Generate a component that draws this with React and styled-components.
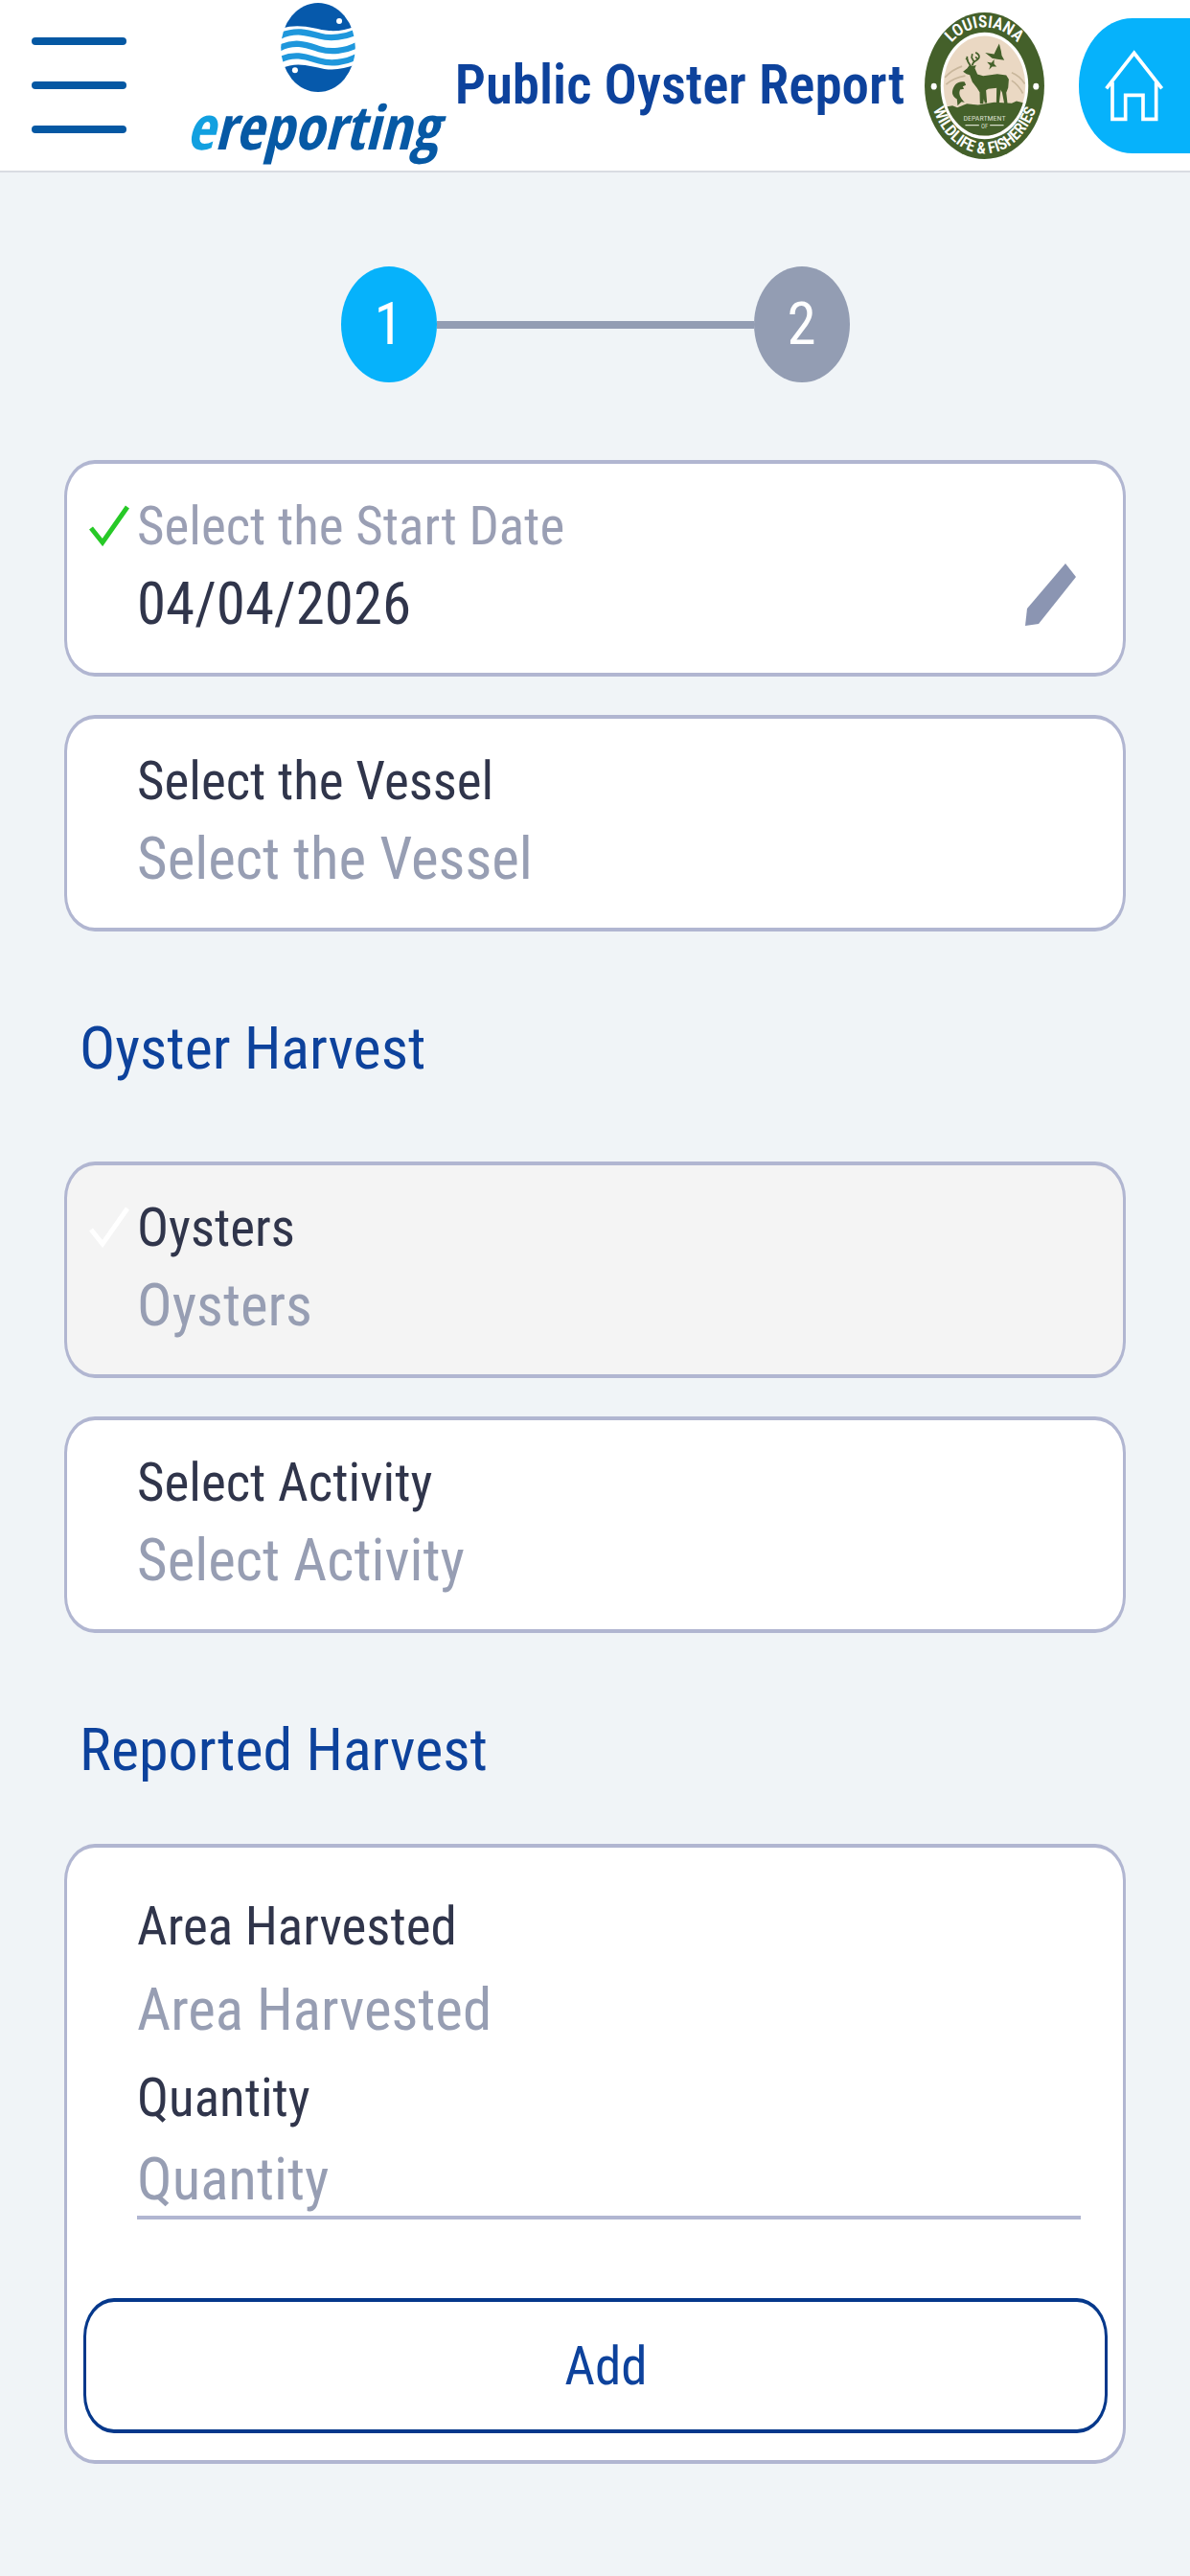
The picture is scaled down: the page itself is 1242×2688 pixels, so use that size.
import React, { useState } from "react";
import styled, { createGlobalStyle } from "styled-components";

const sans = `"Roboto Condensed", Roboto, "Liberation Sans", sans-serif`;

const App = () => {
	const [date, setDate] = useState("04/04/2026");
	const [vessel, setVessel] = useState("");
	const [activity, setActivity] = useState("");
	const [area, setArea] = useState("");
	const [quantity, setQuantity] = useState("");

	return (
		<>
			<GlobalStyle />
			<Header>
				<MenuButton type="button" aria-label="Open menu">
					<Bar />
					<Bar />
					<Bar />
				</MenuButton>
				<Logo href="#">
					<FishBall />
					<LogoText>
						<span>e</span>reporting
					</LogoText>
				</Logo>
				<Title>Public Oyster Report</Title>
				<Seal />
				<HomeLink href="#" aria-label="Home">
					<HouseIcon />
				</HomeLink>
			</Header>

			<Main>
				<Steps>
					<Step $active>1</Step>
					<StepLine />
					<Step>2</Step>
				</Steps>

				<CardList>
					<Card>
						<CheckIcon color="#27c927" />
						<Field>
							<Label htmlFor="date" $done>
								Select the Start Date
							</Label>
							<Input
								id="date"
								type="text"
								value={date}
								onChange={(e) => setDate(e.target.value)}
							/>
						</Field>
						<EditButton type="button" aria-label="Edit start date">
							<PencilIcon />
						</EditButton>
					</Card>
					<Card>
						<Field>
							<Label htmlFor="vessel">Select the Vessel</Label>
							<Select
								id="vessel"
								value={vessel}
								onChange={(e) => setVessel(e.target.value)}
							>
								<option value="">Select the Vessel</option>
							</Select>
						</Field>
					</Card>
				</CardList>

				<Heading>Oyster Harvest</Heading>
				<CardList>
					<Card $disabled>
						<CheckIcon color="#ffffff" />
						<Field>
							<Label htmlFor="species">Oysters</Label>
							<Select id="species" disabled>
								<option>Oysters</option>
							</Select>
						</Field>
					</Card>
					<Card>
						<Field>
							<Label htmlFor="activity">Select Activity</Label>
							<Select
								id="activity"
								value={activity}
								onChange={(e) => setActivity(e.target.value)}
							>
								<option value="">Select Activity</option>
							</Select>
						</Field>
					</Card>
				</CardList>

				<Heading $tight>Reported Harvest</Heading>
				<HarvestCard>
					<HarvestFields>
						<Field $loose>
							<Label htmlFor="area">Area Harvested</Label>
							<Select
								id="area"
								value={area}
								onChange={(e) => setArea(e.target.value)}
							>
								<option value="">Area Harvested</option>
							</Select>
						</Field>
						<Field $loose>
							<Label htmlFor="quantity">Quantity</Label>
							<Input
								id="quantity"
								type="text"
								$underline
								placeholder="Quantity"
								value={quantity}
								onChange={(e) => setQuantity(e.target.value)}
							/>
						</Field>
					</HarvestFields>
					<AddButton type="button">Add</AddButton>
				</HarvestCard>
			</Main>
		</>
	);
};

export default App;

const FishBall = () => (
	<svg width="78" height="93" viewBox="880 9 232 278" aria-hidden="true">
		<clipPath id="ball">
			<ellipse cx="996" cy="148" rx="116" ry="139" />
		</clipPath>
		<g clipPath="url(#ball)">
			<path
				fill="#0659ab"
				d="M870 0H1120V78C1090 92 1062 98 1030 96C985 92 940 70 880 90Z"
			/>
			<path
				fill="#0659ab"
				d="M870 290H1120V198C1085 214 1050 220 1015 215C975 208 930 190 880 214Z"
			/>
			<g fill="none" stroke="#1f97dc" strokeWidth="19">
				<path d="M876 113C925 90 965 102 1000 112S1080 116 1116 100" />
				<path d="M874 151C925 124 965 142 1000 153S1080 160 1118 140" />
				<path d="M876 187C925 162 965 180 1000 190S1080 196 1118 176" />
			</g>
		</g>
		<circle cx="1062" cy="66" r="9" fill="#fff" />
		<circle cx="924" cy="219" r="9" fill="#fff" />
	</svg>
);

const Seal = () => (
	<SealSvg
		width="125"
		height="153"
		viewBox="73 37 374 458"
		role="img"
		aria-label="Louisiana Department of Wildlife and Fisheries"
	>
		<defs>
			<path id="sealTop" d="M109 266A151 183 0 0 1 411 266" />
			<path id="sealBottom" d="M83 240A177 238 0 0 0 437 240" />
			<clipPath id="sealInner">
				<ellipse cx="260" cy="266" rx="128" ry="156" />
			</clipPath>
		</defs>
		<ellipse cx="260" cy="266" rx="187" ry="229" fill="#44602a" />
		<ellipse cx="260" cy="266" rx="137" ry="167" fill="#fff" />
		<g clipPath="url(#sealInner)">
			<rect x="120" y="100" width="280" height="340" fill="#ead8c3" />
			<g fill="none" stroke="#c9b79c" strokeWidth="5">
				<path d="M136 240Q160 215 190 205M140 262Q165 240 200 235" />
				<path d="M345 225Q370 235 386 260M345 250Q365 262 380 290" />
			</g>
			<path
				fill="#44602a"
				d="M120 335L160 328L175 334L205 322L240 326L290 318L345 321L360 314L400 324V440H120Z"
			/>
		</g>
		<g fill="#44602a">
			<path d="M193 222L206 211L214 200L222 205L234 202L230 211L238 230L256 235L300 229L328 233L336 246L334 272L328 288L332 322H322L315 286L306 272L272 276L262 282L256 322H246L245 286L236 272L222 254L214 232L204 229Z" />
			<path d="M298 270L312 270L306 320H297ZM248 270L264 270L268 320H261Z" />
			<path d="M262 163L290 167L298 150L306 134L312 158L314 172L322 186L300 183L284 180Z" />
			<path d="M268 192L282 194L290 184L290 198L298 206L284 206L274 216L278 203Z" />
			<path d="M160 282C164 262 178 250 198 254L202 264L192 268L196 276L184 278C178 292 184 302 198 318L188 316L176 328L174 308C162 300 158 292 160 282Z" />
		</g>
		<g fill="none" stroke="#44602a" strokeWidth="5">
			<path d="M217 204C208 194 204 186 206 174M209 188L202 180M222 203C222 188 236 190 242 180C246 172 240 166 232 162M228 192L220 178L222 166M240 184L232 176" />
		</g>
		<g fill="#fff" fontFamily={sans} textAnchor="middle">
			<text fontSize="52" fontWeight="600">
				<textPath href="#sealTop" startOffset="50%">
					LOUISIANA
				</textPath>
			</text>
			<text fontSize="50" fontWeight="600">
				<textPath href="#sealBottom" startOffset="50%">
					WILDLIFE &amp; FISHERIES
				</textPath>
			</text>
			<text x="260" y="374" fontSize="24" fill="#d5dcc9">
				DEPARTMENT
			</text>
			<text x="260" y="398" fontSize="20" fill="#d5dcc9">
				OF
			</text>
			<path d="M200 387H243V391H200ZM277 387H320V391H277Z" fill="#d5dcc9" />
			<ellipse cx="102" cy="268" rx="9" ry="10" />
			<ellipse cx="421" cy="268" rx="9" ry="10" />
		</g>
	</SealSvg>
);

const HouseIcon = () => (
	<svg width="61" height="75" viewBox="636 149 183 225" aria-hidden="true">
		<path
			fill="none"
			stroke="#fff"
			strokeWidth="11"
			d="M641 270L728 159L815 270M660 250V366H701V291H756V366H797V250"
		/>
	</svg>
);

const CheckIcon = ({ color }) => (
	<CheckSvg width="42" height="43" viewBox="0 0 42 43" aria-hidden="true">
		<path d="M2 24L14 39L40 2" fill="none" stroke={color} strokeWidth="5" />
	</CheckSvg>
);

const PencilIcon = () => (
	<svg width="53" height="65" viewBox="0 0 53 65" aria-hidden="true">
		<path d="M42 0L53 14L14 63L0 65L2 47Z" fill="#8b95b2" />
	</svg>
);

const GlobalStyle = createGlobalStyle`
	* {
		box-sizing: border-box;
	}

	body {
		margin: 0;
		min-height: 100vh;
		background: #f0f4f7;
		font-family: ${sans};
	}

	button, input, select {
		font-family: inherit;
	}
`;

const Header = styled.header`
	display: flex;
	align-items: center;
	height: 180px;
	padding-left: 33px;
	background: #fff;
	border-bottom: 2px solid #d9dce2;
`;

const MenuButton = styled.button`
	display: flex;
	flex-direction: column;
	gap: 38px;
	width: 99px;
	padding: 0;
	margin-right: 66px;
	border: none;
	background: none;
	cursor: pointer;
`;

const Bar = styled.span`
	height: 8px;
	border-radius: 4px;
	background: #0558a3;
`;

const Logo = styled.a`
	align-self: flex-start;
	display: flex;
	flex-direction: column;
	align-items: center;
	width: 268px;
	padding-top: 3px;
	text-decoration: none;
`;

const LogoText = styled.span`
	padding-right: 12px;
	font-family: "Open Sans Condensed", "Open Sans", sans-serif;
	font-size: 64px;
	font-weight: 700;
	font-style: italic;
	line-height: 72px;
	color: #0659a5;

	span {
		color: #12a0e0;
	}
`;

const Title = styled.h1`
	flex: 1;
	margin: 0;
	padding-right: 12px;
	font-size: 57px;
	font-weight: 600;
	line-height: 64px;
	text-align: center;
	white-space: nowrap;
	color: #0d429c;
`;

const SealSvg = styled.svg`
	flex: none;
	margin-right: 36px;
`;

const HomeLink = styled.a`
	display: flex;
	align-items: center;
	justify-content: center;
	width: 116px;
	height: 141px;
	padding-right: 2px;
	border-radius: 56px 0 0 56px / 70px 0 0 70px;
	background: #06b2fb;
`;

const Main = styled.main`
	padding: 98px 67px 80px;
`;

const Steps = styled.div`
	display: flex;
	align-items: center;
	justify-content: center;
	margin-bottom: 81px;
`;

const Step = styled.div`
	width: 100px;
	height: 121px;
	border-radius: 50%;
	background: ${(p) => (p.$active ? "#06b2fb" : "#939db3")};
	color: #fff;
	font-size: 61px;
	line-height: 121px;
	text-align: center;
`;

const StepLine = styled.div`
	width: 331px;
	height: 8px;
	background: #939db3;
`;

const CardList = styled.div`
	display: flex;
	flex-direction: column;
	gap: 40px;
`;

const Card = styled.div`
	position: relative;
	display: flex;
	align-items: center;
	gap: 24px;
	padding: 33px 49px 32px 73px;
	border: solid #b1b6d1;
	border-width: 4px 3px;
	border-radius: 32px / 38px;
	background: ${(p) => (p.$disabled ? "#f4f4f4" : "#fff")};
`;

const CheckSvg = styled.svg`
	position: absolute;
	top: 43px;
	left: 23px;
`;

const Field = styled.div`
	flex: 1;
	display: flex;
	flex-direction: column;
	gap: ${(p) => (p.$loose ? "15px" : "9px")};
`;

const Label = styled.label`
	font-size: 55px;
	line-height: 64px;
	color: ${(p) => (p.$done ? "#9a9fb4" : "#30354b")};
`;

const Input = styled.input`
	width: 100%;
	height: 80px;
	padding: 0;
	border: none;
	border-bottom: ${(p) => (p.$underline ? "4px solid #b1b6d1" : "none")};
	outline: none;
	background: none;
	font-size: 61px;
	color: #30354b;

	&::placeholder {
		color: #979eb3;
		opacity: 1;
	}
`;

const Select = styled.select`
	width: 100%;
	height: 80px;
	padding: 0;
	border: none;
	outline: none;
	appearance: none;
	background: none;
	font-size: 61px;
	color: #979eb3;

	&:disabled {
		color: #979eb3;
		opacity: 1;
	}
`;

const EditButton = styled.button`
	display: flex;
	padding: 54px 0 0;
	border: none;
	background: none;
	cursor: pointer;
`;

const Heading = styled.h2`
	margin: 82px 0 ${(p) => (p.$tight ? "58px" : "78px")};
	padding-left: 16px;
	font-size: 62px;
	font-weight: 400;
	line-height: 80px;
	color: #0d429c;
`;

const HarvestCard = styled.div`
	display: flex;
	flex-direction: column;
	gap: 82px;
	padding: 50px 16px 28px 17px;
	border: solid #b1b6d1;
	border-width: 4px 3px;
	border-radius: 32px / 38px;
	background: #fff;
`;

const HarvestFields = styled.div`
	display: flex;
	flex-direction: column;
	gap: 20px;
	padding: 0 28px 0 56px;
`;

const AddButton = styled.button`
	height: 141px;
	padding: 0 0 0 22px;
	border: solid #05388b;
	border-width: 4px 3px;
	border-radius: 32px / 40px;
	background: #fff;
	font-size: 55px;
	color: #0d429c;
	cursor: pointer;
`;
